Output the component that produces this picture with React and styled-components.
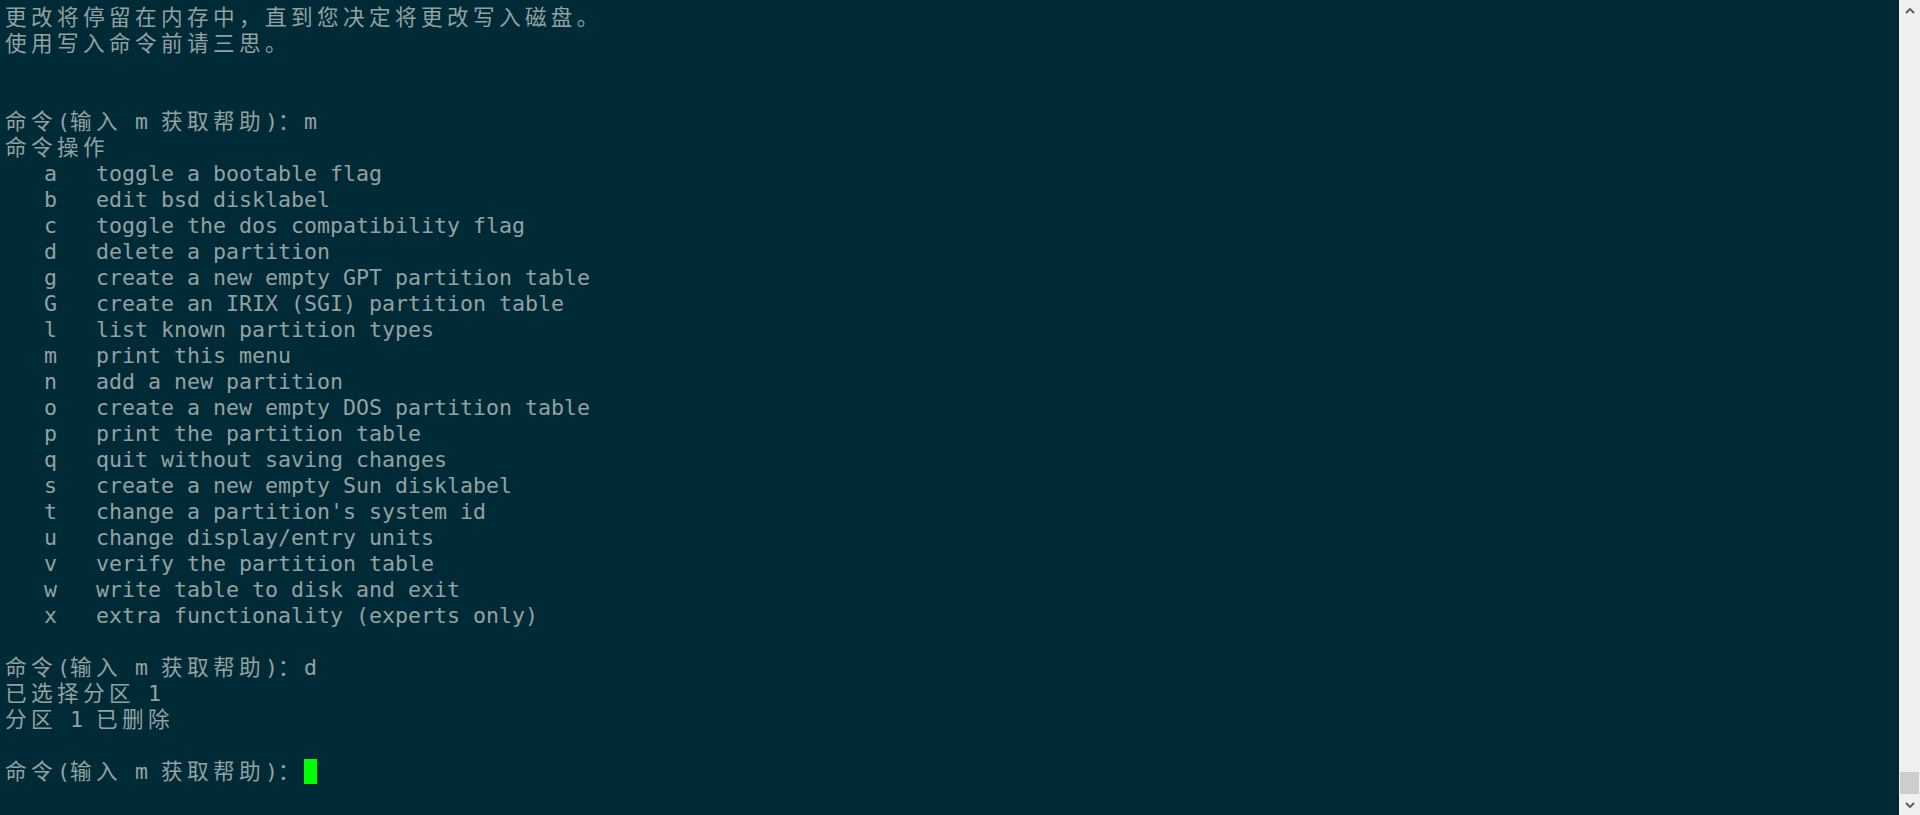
import React from "react";
import styled, { createGlobalStyle } from "styled-components";

const GlobalStyle = createGlobalStyle`
  html, body {
    margin: 0;
    padding: 0;
    background: #002b36;
    overflow: hidden;
  }
`;

const lines = [
  "更改将停留在内存中，直到您决定将更改写入磁盘。",
  "使用写入命令前请三思。",
  "",
  "",
  "命令(输入 m 获取帮助)：m",
  "命令操作",
  "   a   toggle a bootable flag",
  "   b   edit bsd disklabel",
  "   c   toggle the dos compatibility flag",
  "   d   delete a partition",
  "   g   create a new empty GPT partition table",
  "   G   create an IRIX (SGI) partition table",
  "   l   list known partition types",
  "   m   print this menu",
  "   n   add a new partition",
  "   o   create a new empty DOS partition table",
  "   p   print the partition table",
  "   q   quit without saving changes",
  "   s   create a new empty Sun disklabel",
  "   t   change a partition's system id",
  "   u   change display/entry units",
  "   v   verify the partition table",
  "   w   write table to disk and exit",
  "   x   extra functionality (experts only)",
  "",
  "命令(输入 m 获取帮助)：d",
  "已选择分区 1",
  "分区 1 已删除",
  "",
];

const PROMPT = "命令(输入 m 获取帮助)：";

// split into runs so the wide (CJK) chars can be stretched to two cells
const splitRuns = (text) => {
  const runs = [];
  let cur = "";
  let wide = false;
  for (const ch of text) {
    const w = ch.charCodeAt(0) > 0x2e80;
    if (cur && w !== wide) {
      runs.push({ text: cur, wide });
      cur = "";
    }
    wide = w;
    cur += ch;
  }
  if (cur) runs.push({ text: cur, wide });
  return runs;
};

const TermText = ({ text }) =>
  splitRuns(text).map((run, i) =>
    run.wide ? <Wide key={i}>{run.text}</Wide> : <span key={i}>{run.text}</span>
  );

const Chevron = ({ down }) => (
  <svg width="10" height="6" viewBox="0 0 10 6">
    <polyline
      points={down ? "1,1 5,5 9,1" : "1,5 5,1 9,5"}
      fill="none"
      stroke="#606060"
      strokeWidth="2"
    />
  </svg>
);

const App = () => {
  return (
    <>
      <GlobalStyle />
      <Window>
        <Screen>
          {lines.map((line, i) => (
            <Line key={i}>
              <TermText text={line} />
            </Line>
          ))}
          <Line>
            <TermText text={PROMPT} />
            <Cursor />
          </Line>
        </Screen>
        <Scrollbar>
          <ArrowButton>
            <Chevron />
          </ArrowButton>
          <Track>
            <Thumb />
          </Track>
          <ArrowButton>
            <Chevron down />
          </ArrowButton>
        </Scrollbar>
      </Window>
    </>
  );
};

const Window = styled.div`
  display: flex;
  height: 100vh;
  background: #002b36;
`;

const Screen = styled.div`
  flex: 1;
  padding: 5px 5px;
  font-family: "DejaVu Sans Mono", "Noto Sans CJK SC", monospace;
  font-size: 21.6px;
  line-height: 26px;
  color: #93a1a1;
  overflow: hidden;
`;

const Line = styled.div`
  height: 26px;
  white-space: pre;
`;

const Wide = styled.span`
  letter-spacing: 4.4px;
`;

const Cursor = styled.span`
  display: inline-block;
  width: 13px;
  height: 25px;
  vertical-align: top;
  background: #00ff00;
`;

const Scrollbar = styled.div`
  width: 21px;
  display: flex;
  flex-direction: column;
  background: #f0f0f0;
`;

const ArrowButton = styled.div`
  height: 21px;
  display: flex;
  align-items: center;
  justify-content: center;
`;

const Track = styled.div`
  flex: 1;
  display: flex;
  flex-direction: column;
  justify-content: flex-end;
`;

const Thumb = styled.div`
  height: 22px;
  margin: 0 1px;
  background: #cdcdcd;
`;

export default App;
